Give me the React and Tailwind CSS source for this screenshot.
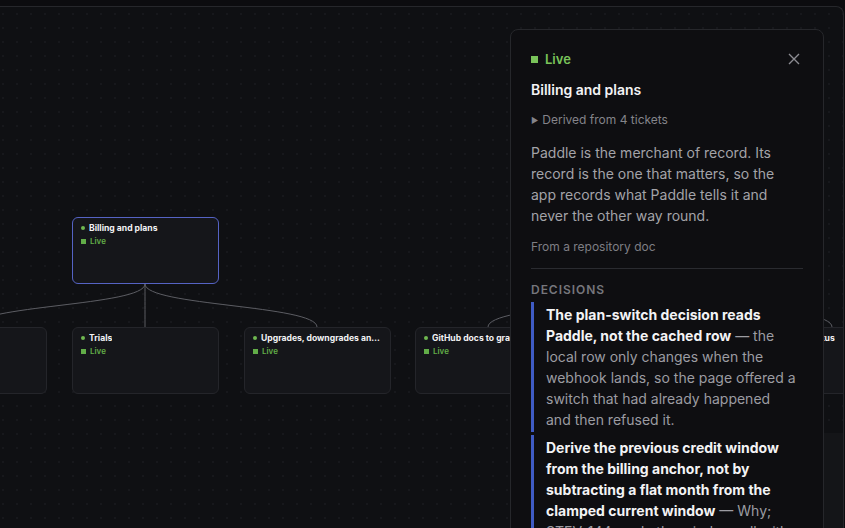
import React from "react";

const nodes = [
  { x: -100, title: "Payment methods", parent: 145 },
  { x: 72, title: "Trials", parent: 145 },
  { x: 244, title: "Upgrades, downgrades and trials", parent: 145 },
  { x: 415, title: "GitHub docs to graph", parent: 660 },
  { x: 587, title: "Credit window", parent: null },
  { x: 759, title: "Invoice status", parent: 660 },
];

function Node({ x, y, title, selected }) {
  return (
    <div
      className={
        "absolute w-[147px] h-[67px] rounded-md bg-[#15161a] px-[8px] pt-[4px] " +
        (selected ? "border border-[#5563c4]" : "border border-[#24252a]")
      }
      style={{ left: x, top: y }}
    >
      <div className="flex items-center gap-[4px] text-[8.6px] font-bold leading-[12px] text-[#f2f2f4]">
        <span className="w-[4px] h-[4px] rounded-full bg-[#6fb850] shrink-0" />
        <span className="truncate min-w-0">{title}</span>
      </div>
      <div className="mt-[2px] flex items-center gap-[4px] text-[8px] font-semibold leading-[11px] text-[#62ad48]">
        <span className="w-[5px] h-[5px] bg-[#62ad48]" />
        Live
      </div>
    </div>
  );
}

function Edges() {
  const sy = 283;
  const ty = 326;
  return (
    <svg className="absolute left-0 top-0" width="845" height="528">
      {nodes
        .filter((n) => n.parent !== null)
        .map((n) => {
          const sx = n.parent;
          const tx = n.x + 73;
          return (
            <path
              key={n.x}
              d={`M${sx} ${sy} C${sx} ${sy + 22}, ${tx} ${ty - 22}, ${tx} ${ty}`}
              fill="none"
              stroke="#5c5d63"
              strokeWidth="1"
            />
          );
        })}
    </svg>
  );
}

function Decision({ bold, rest }) {
  return (
    <div className="border-l-[3px] border-[#3f5bc4] pl-[12px] py-[2px]">
      <p className="w-[252px] text-[14px] leading-[21px] text-[#9c9ca2]">
        <span className="font-bold text-[#f3f3f5]">{bold}</span> — {rest}
      </p>
    </div>
  );
}

export default function App() {
  return (
    <div
      className="relative w-[845px] h-[528px] overflow-hidden bg-[#0c0c0f]"
      style={{ fontFamily: "Inter, 'Noto Sans', sans-serif" }}
    >
      <div className="absolute left-[-4px] top-[6px] w-[848px] h-[540px] rounded-tr-[8px] border-t border-r border-[#26272b] bg-[#0f1013] bg-[radial-gradient(#17181c_1px,transparent_1px)] bg-[size:14px_14px] overflow-hidden">
        <div className="absolute left-[4px] top-[-6px] w-[845px] h-[528px]">
          <Edges />
          <Node x={72} y={216} title="Billing and plans" selected />
          <Node x={587} y={216} title="Checkout" />
          {nodes.map((n) => (
            <Node key={n.x} x={n.x} y={326} title={n.title} />
          ))}
          <div className="absolute left-[700px] top-[432px] w-[160px] h-[110px] bg-[#141518]" />
        </div>
      </div>

      <aside className="absolute left-[510px] top-[29px] w-[314px] h-[520px] rounded-[8px] border border-[#26272b] bg-[#0e0e11] pl-[20px] pr-[20px] pt-[20px]">
        <div className="flex items-center justify-between">
          <div className="flex items-center gap-[7px] text-[13px] font-semibold leading-[18px] text-[#79c35a]">
            <span className="w-[7px] h-[7px] bg-[#79c35a]" />
            Live
          </div>
          <svg width="12" height="12" viewBox="0 0 12 12" className="mr-[3px]">
            <path d="M1 1 L11 11 M11 1 L1 11" stroke="#8c8c92" strokeWidth="1.4" />
          </svg>
        </div>
        <h2 className="mt-[12px] text-[14px] font-semibold leading-[20px] text-[#f3f3f5]">
          Billing and plans
        </h2>
        <div className="mt-[12px] flex items-center gap-[4px] text-[12px] leading-[16px] text-[#84848a]">
          <span className="text-[8px]">▶</span>
          Derived from 4 tickets
        </div>
        <p className="mt-[14px] text-[14px] leading-[21px] text-[#a3a3a8]">
          Paddle is the merchant of record. Its record is the one that matters, so the app
          records what Paddle tells it and never the other way round.
        </p>
        <div className="mt-[13px] text-[12px] leading-[16px] text-[#7e7e84]">
          From a repository doc
        </div>
        <div className="mt-[13px] border-t border-[#2a2b30]" />
        <div className="mt-[13px] text-[12px] font-semibold tracking-[0.08em] leading-[16px] text-[#76767c]">
          DECISIONS
        </div>
        <div className="mt-[4px] flex flex-col gap-[3px]">
          <Decision
            bold="The plan-switch decision reads Paddle, not the cached row"
            rest="the local row only changes when the webhook lands, so the page offered a switch that had already happened and then refused it."
          />
          <Decision
            bold="Derive the previous credit window from the billing anchor, not by subtracting a flat month from the clamped current window"
            rest="Why; STEV-144 made the window roll with the anchor day."
          />
        </div>
      </aside>
    </div>
  );
}
